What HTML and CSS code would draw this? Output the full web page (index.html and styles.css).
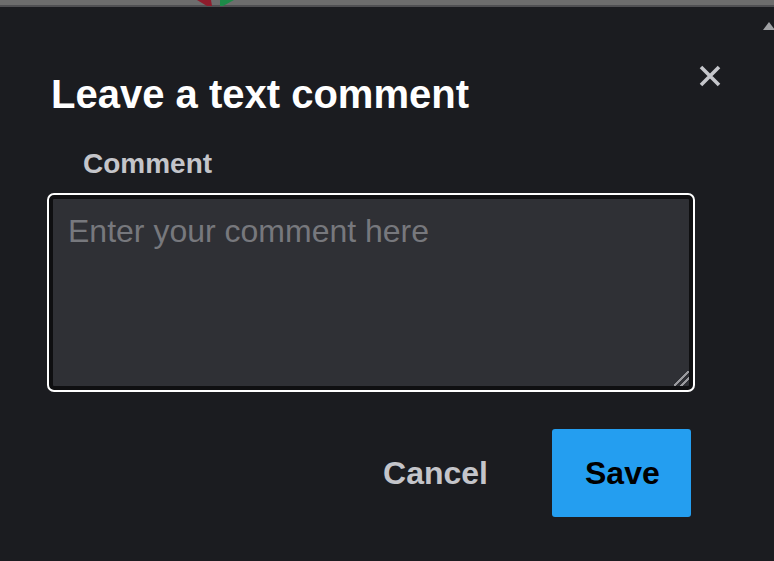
FILE: index.html
```html
<!DOCTYPE html>
<html lang="en">
<head>
<meta charset="utf-8">
<title>Leave a text comment</title>
<link rel="stylesheet" href="styles.css">
</head>
<body>
<div class="topbar">
  <svg class="logo-peek" width="40" height="6" viewBox="0 0 40 6"><path d="M0 0 L14 0 L15 6 L10 6 Z" fill="#8e1c2c"/><path d="M23 0 L37 0 L26 6 L23 6 Z" fill="#1d8a48"/></svg>
</div>
<div class="scroll-up"></div>
<div class="dialog">
  <div class="header">
    <h1 class="title">Leave a text comment</h1>
    <button class="close" aria-label="Close">
      <svg width="24" height="24" viewBox="0 0 24 24"><path d="M3 3 L21 21 M21 3 L3 21" stroke="#c5c6cb" stroke-width="3.6" stroke-linecap="butt" fill="none"/></svg>
    </button>
  </div>
  <label class="label" for="c">Comment</label>
  <textarea id="c" class="comment" placeholder="Enter your comment here"></textarea>
  <div class="actions">
    <button class="btn cancel">Cancel</button>
    <button class="btn save">Save</button>
  </div>
</div>
</body>
</html>
```
FILE: styles.css
```css
html, body {
  margin: 0;
  padding: 0;
  background: #1b1c20;
  height: 100%;
  overflow: hidden;
  font-family: "Liberation Sans", Arial, sans-serif;
}
.topbar {
  height: 5px;
  background: #6d6d6d;
  border-bottom: 2px solid #505053;
  position: relative;
}
.logo-peek {
  position: absolute;
  left: 197px;
  top: 0;
  display: block;
}
.scroll-up {
  position: absolute;
  top: 22px;
  right: -1px;
  width: 0;
  height: 0;
  border-left: 6px solid transparent;
  border-right: 6px solid transparent;
  border-bottom: 8px solid #a0a1a4;
}
.dialog {
  padding: 64px 79px 0 47px;
  display: flex;
  flex-direction: column;
}
.header {
  display: flex;
  justify-content: space-between;
  align-items: flex-start;
  margin-right: -27px;
}
.title {
  margin: 0 0 0 4px;
  font-size: 40px;
  line-height: 46px;
  font-weight: bold;
  color: #ffffff;
}
.close {
  background: none;
  border: 0;
  padding: 0;
  margin: -7px 0 0 0;
  width: 24px;
  height: 24px;
  display: block;
}
.close svg { display: block; }
.label {
  margin: 31px 0 0 36px;
  font-size: 28px;
  line-height: 32px;
  font-weight: bold;
  color: #c4c5ca;
}
.comment {
  margin: 15px 2px 0 2px;
  box-sizing: border-box;
  height: 195px;
  background: #2f3035;
  border: 4px solid #0f0f11;
  outline: 2px solid #ffffff;
  border-radius: 5px;
  padding: 14px 15px;
  font-family: "Liberation Sans", Arial, sans-serif;
  font-size: 32px;
  color: #e0e0e0;
  color-scheme: dark;
}
.comment::placeholder { color: #77787d; }
.comment::-webkit-resizer {
  background: linear-gradient(135deg, transparent 0 45%, #9a9a9e 45% 55%, transparent 55% 68%, #9a9a9e 68% 78%, transparent 78%);
}
.actions {
  display: flex;
  justify-content: flex-end;
  margin: 39px 4px 0 0;
}
.btn {
  font-family: "Liberation Sans", Arial, sans-serif;
  font-size: 32px;
  font-weight: bold;
  height: 88px;
  border: 0;
  border-radius: 3px;
  padding: 0 33px;
}
.cancel {
  background: transparent;
  color: #c4c5ca;
  margin-right: 32px;
  padding: 0 32px;
}
.save {
  background: #249ef0;
  color: #000000;
  width: 139px;
}
```
